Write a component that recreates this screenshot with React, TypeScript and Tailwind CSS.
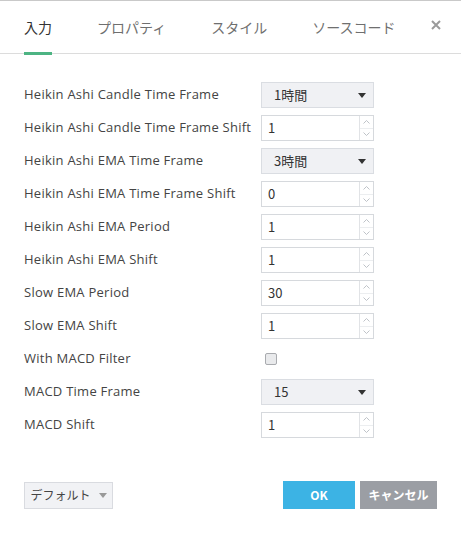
import React from 'react';

const jp = { fontFamily: '"Noto Sans CJK JP", "Noto Sans", sans-serif' };
const lat = { fontFamily: '"Open Sans", "Noto Sans CJK JP", sans-serif' };

type Row =
  | { label: string; kind: 'select'; value: string }
  | { label: string; kind: 'number'; value: string }
  | { label: string; kind: 'check' };

const rows: Row[] = [
  { label: 'Heikin Ashi Candle Time Frame', kind: 'select', value: '1時間' },
  { label: 'Heikin Ashi Candle Time Frame Shift', kind: 'number', value: '1' },
  { label: 'Heikin Ashi EMA Time Frame', kind: 'select', value: '3時間' },
  { label: 'Heikin Ashi EMA Time Frame Shift', kind: 'number', value: '0' },
  { label: 'Heikin Ashi EMA Period', kind: 'number', value: '1' },
  { label: 'Heikin Ashi EMA Shift', kind: 'number', value: '1' },
  { label: 'Slow EMA Period', kind: 'number', value: '30' },
  { label: 'Slow EMA Shift', kind: 'number', value: '1' },
  { label: 'With MACD Filter', kind: 'check' },
  { label: 'MACD Time Frame', kind: 'select', value: '15' },
  { label: 'MACD Shift', kind: 'number', value: '1' },
];

const Caret = ({ color = '#333' }: { color?: string }) => (
  <svg width="8" height="5" viewBox="0 0 8 5">
    <path d="M0 0 L8 0 L4 5 Z" fill={color} />
  </svg>
);

const Spinner = () => (
  <div className="flex w-[14px] flex-col border-l border-[#e1e3e6]">
    <div className="flex flex-1 items-center justify-center border-b border-[#eceef0]">
      <svg width="7" height="4" viewBox="0 0 7 4">
        <path d="M0.5 3.5 L3.5 0.5 L6.5 3.5" fill="none" stroke="#b8bcc2" strokeWidth="0.9" />
      </svg>
    </div>
    <div className="flex flex-1 items-center justify-center">
      <svg width="7" height="4" viewBox="0 0 7 4">
        <path d="M0.5 0.5 L3.5 3.5 L6.5 0.5" fill="none" stroke="#b8bcc2" strokeWidth="0.9" />
      </svg>
    </div>
  </div>
);

const Field = ({ row }: { row: Row }) => {
  if (row.kind === 'select') {
    return (
      <div className="flex h-[26px] w-[113px] items-center justify-between border border-[#dadde2] bg-[#f0f1f4] pl-[12px] pr-[7px] text-[13px] text-[#333]" style={jp}>
        <span>{row.value}</span>
        <Caret />
      </div>
    );
  }
  if (row.kind === 'number') {
    return (
      <div className="flex h-[26px] w-[113px] border border-[#d6d9dd] bg-white">
        <div className="flex flex-1 items-center pl-[6px] text-[13px] text-[#333]" style={jp}>
          {row.value}
        </div>
        <Spinner />
      </div>
    );
  }
  return (
    <div className="flex h-[26px] items-center pl-[4px]">
      <div className="h-[12px] w-[12px] rounded-[2px] border border-[#a9abaf] bg-[#e9eaec]" />
    </div>
  );
};

export default function App() {
  return (
    <div className="h-[535px] w-[461px] border-t border-[#c9c9c9] bg-white">
      <div className="relative flex h-[53px] items-end border-b border-[#dcdcdc] px-[24px]" style={jp}>
        <div className="relative mr-[45px] pb-[15px] text-[14px] text-[#333]">
          入力
          <div className="absolute bottom-[-2px] left-0 right-0 h-[3px] bg-[#4db483]" />
        </div>
        <div className="mr-[45px] pb-[15px] text-[14px] text-[#6f6f6f]">プロパティ</div>
        <div className="mr-[45px] pb-[15px] text-[14px] text-[#6f6f6f]">スタイル</div>
        <div className="pb-[15px] text-[14px] text-[#6f6f6f]">ソースコード</div>
        <div className="absolute right-[20px] top-[19px]">
          <svg width="10" height="10" viewBox="0 0 10 10">
            <path d="M1 1 L9 9 M9 1 L1 9" stroke="#9a9a9a" strokeWidth="2" />
          </svg>
        </div>
      </div>

      <div className="flex flex-col gap-[7px] pl-[24px] pt-[28px]">
        {rows.map((row) => (
          <div key={row.label} className="flex items-center">
            <div className="w-[237px] text-[13px] tracking-[0.25px] text-[#444]" style={lat}>
              {row.label}
            </div>
            <Field row={row} />
          </div>
        ))}
      </div>

      <div className="mt-[43px] flex items-center px-[24px]">
        <div className="flex h-[27px] w-[89px] items-center justify-center gap-[8px] border border-[#d9dbe0] bg-[#f1f2f5] text-[12px] text-[#444]" style={jp}>
          <span>デフォルト</span>
          <Caret color="#999" />
        </div>
        <div className="ml-auto flex gap-[5px]">
          <div className="flex h-[28px] w-[72px] items-center justify-center bg-[#3cb3e4] text-[12px] font-bold text-white" style={jp}>
            OK
          </div>
          <div className="flex h-[28px] w-[77px] items-center justify-center bg-[#9b9ea4] text-[12px] font-bold text-white" style={jp}>
            キャンセル
          </div>
        </div>
      </div>
    </div>
  );
}
